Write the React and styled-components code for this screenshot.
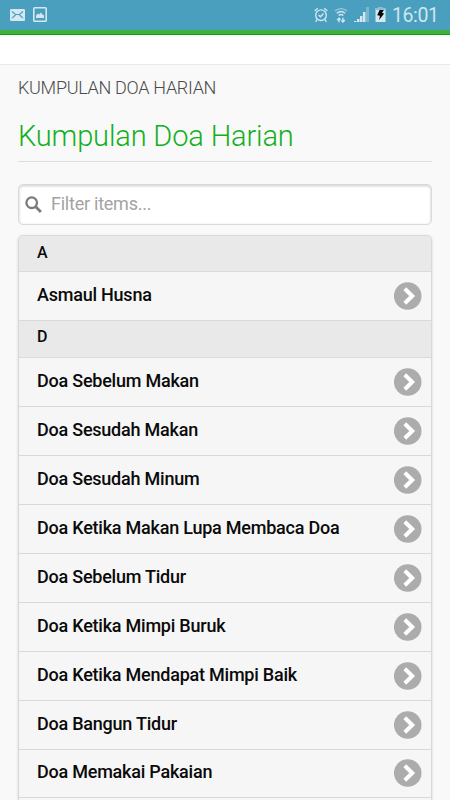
import React from "react";
import styled, { createGlobalStyle } from "styled-components";

const groups = [
    { letter: "A", items: ["Asmaul Husna"] },
    {
        letter: "D",
        items: [
            "Doa Sebelum Makan",
            "Doa Sesudah Makan",
            "Doa Sesudah Minum",
            "Doa Ketika Makan Lupa Membaca Doa",
            "Doa Sebelum Tidur",
            "Doa Ketika Mimpi Buruk",
            "Doa Ketika Mendapat Mimpi Baik",
            "Doa Bangun Tidur",
            "Doa Memakai Pakaian",
        ],
    },
];

const MailIcon = () => (
    <svg width="15" height="12" viewBox="0 0 15 12">
        <rect width="15" height="12" rx="1.2" fill="#d3e8f0" />
        <path d="M2 2.5 5.5 5.5H9.5L13 2.5M2 9.2 5.5 6M13 9.2 9.5 6" fill="none" stroke="#4a9fbf" strokeWidth="1.1" />
    </svg>
);

const PictureIcon = () => (
    <svg width="14" height="15" viewBox="0 0 14 15">
        <rect x=".8" y=".8" width="12.4" height="13.4" rx=".8" fill="none" stroke="#d3e8f0" strokeWidth="1.6" />
        <path d="M3 11V8.5L5 6.5 6.2 7.5 8 5.5 9.3 7.5 11 8.3V11Z" fill="#d3e8f0" />
    </svg>
);

const AlarmIcon = () => (
    <svg width="14" height="16" viewBox="0 0 14 16" fill="none" stroke="#d0e7ef" strokeWidth="1.4">
        <circle cx="7" cy="8.2" r="5.3" />
        <path d="M.7 4 3.7 1.3M10.3 1.3 13.3 4M3 12.5 1.7 14.8M11 12.5 12.3 14.8M4.5 8 6.5 9.8 9.5 6.5" />
    </svg>
);

const WifiIcon = () => (
    <svg width="14" height="16" viewBox="0 0 14 16" fill="none" stroke="#d0e7ef" strokeWidth="1.4">
        <path d="M1 4Q7-.8 13 4" opacity=".6" />
        <path d="M2.8 6.3Q7 2.6 11.2 6.3M4.7 8.6Q7 6.4 9.3 8.6" />
        <path d="M5 15.2V11.4M3.2 13.2 5 11.2 6.6 12.8M9 10.8V14.7M7.4 13.2 9 15 10.9 13.1" />
    </svg>
);

const SignalIcon = () => (
    <svg width="15" height="15" viewBox="0 0 15 15" fill="#d3e8f0">
        <path d="M0 14h2.5v1H0zM3 12h2.5v3H3zM6 9h2.5v6H6zM9 5h2.5v10H9z" />
        <path d="M12 0h3v15h-3z" opacity=".35" />
    </svg>
);

const BatteryIcon = () => (
    <svg width="11" height="15" viewBox="0 0 11 15">
        <path d="M3 0h5v1.2h2.5V15H.5V1.2H3z" fill="#d3e8f0" />
        <path d="M3 0h5v1.2h2.5V3H.5V1.2H3z" fill="#86bfd4" />
        <path d="M4.6 3H8.8L7 6.1 9.2 6.4 4 13 5 8.7 2.2 8.2Z" fill="#050505" />
    </svg>
);

const SearchIcon = () => (
    <svg width="17" height="17" viewBox="0 0 17 17" fill="none" stroke="#7c7c7c">
        <circle cx="6.7" cy="6.7" r="5.3" strokeWidth="2.3" />
        <path d="M10.7 10.7 15.9 15.9" strokeWidth="2.8" />
    </svg>
);

const ArrowIcon = () => (
    <svg width="28" height="28" viewBox="0 0 28 28">
        <circle cx="13.7" cy="14" r="13.8" fill="#acacac" />
        <path d="M10.8 6.8 18.2 14 10.8 21.2" fill="none" stroke="#fff" strokeWidth="4" />
    </svg>
);

const App = () => {
    return (
        <Page>
            <GlobalStyle />
            <StatusBar>
                <Left>
                    <MailIcon />
                    <PictureIcon />
                </Left>
                <Right>
                    <AlarmIcon />
                    <WifiIcon />
                    <SignalIcon />
                    <BatteryIcon />
                    <Clock>16:01</Clock>
                </Right>
            </StatusBar>
            <Stripe />
            <Header />
            <Content>
                <Crumb>KUMPULAN DOA HARIAN</Crumb>
                <Title>Kumpulan Doa Harian</Title>
                <Search>
                    <SearchIcon />
                    <input placeholder="Filter items..." />
                </Search>
                <List>
                    {groups.map((group) => (
                        <React.Fragment key={group.letter}>
                            <Divider $first={group.letter === "A"}>{group.letter}</Divider>
                            {group.items.map((item) => (
                                <Item key={item}>
                                    <span>{item}</span>
                                    <ArrowIcon />
                                </Item>
                            ))}
                        </React.Fragment>
                    ))}
                </List>
            </Content>
        </Page>
    );
};

export default App;

const GlobalStyle = createGlobalStyle`
* {
    box-sizing: border-box;
}
body {
    margin: 0;
    font-family: Roboto, sans-serif;
}
svg {
    display: block;
    flex-shrink: 0;
}
`;

const Page = styled.div`
width: 100%;
height: 100vh;
overflow: hidden;
display: flex;
flex-direction: column;
background-color: #f9f9f9;
`;

const StatusBar = styled.div`
height: 30px;
flex-shrink: 0;
padding: 0 11px 0 10px;
display: flex;
justify-content: space-between;
align-items: center;
background-color: #4a9fbf;
`;

const Left = styled.div`
display: flex;
align-items: center;
gap: 8px;
padding-bottom: 1px;
`;

const Right = styled.div`
display: flex;
align-items: center;
gap: 6px;
padding-bottom: 1px;
`;

const Clock = styled.div`
width: 47px;
font-size: 19.5px;
line-height: 30px;
letter-spacing: -0.4px;
padding-top: 2px;
color: #cfe6ee;
white-space: nowrap;
`;

const Stripe = styled.div`
height: 5px;
flex-shrink: 0;
background-color: #3eb23f;
border-bottom: 1px solid #06a60c;
`;

const Header = styled.div`
height: 30px;
flex-shrink: 0;
background-color: #fff;
border-bottom: 1px solid #e9e9e9;
`;

const Content = styled.div`
flex: 1;
min-height: 0;
padding: 11px 18px 0;
display: flex;
flex-direction: column;
`;

const Crumb = styled.div`
height: 24px;
flex-shrink: 0;
line-height: 24px;
font-size: 18px;
font-weight: 300;
letter-spacing: -0.3px;
color: #4a4a4a;
white-space: nowrap;
`;

const Title = styled.h1`
height: 62px;
flex-shrink: 0;
margin: 0;
padding-top: 18px;
line-height: 36px;
font-size: 29px;
font-weight: 300;
letter-spacing: -0.15px;
color: #12b01e;
white-space: nowrap;
border-bottom: 1px solid #dedede;
`;

const Search = styled.div`
height: 41px;
flex-shrink: 0;
margin-top: 22px;
padding: 0 6px;
display: flex;
align-items: center;
gap: 9px;
background-color: #fff;
border: 1px solid #d9d9d9;
border-radius: 5px;
box-shadow: inset 0 1px 3px rgba(0, 0, 0, 0.2);

    input {
        flex: 1;
        min-width: 0;
        padding: 0 0 2px;
        border: 0;
        outline: none;
        background: transparent;
        font-family: Roboto, sans-serif;
        font-size: 18px;
        letter-spacing: -0.24px;
    }

    input::placeholder {
        color: #a3a3a3;
    }
`;

const List = styled.div`
flex: 1;
min-height: 0;
margin-top: 10px;
background-color: #f6f6f6;
border: 1px solid #d9d9d9;
border-bottom: 0;
border-radius: 5px 5px 0 0;
box-shadow: 0 1px 3px rgba(0, 0, 0, 0.15);
`;

const Divider = styled.div`
height: ${({ $first }) => ($first ? "36px" : "37.5px")};
padding: 0 18px;
line-height: ${({ $first }) => ($first ? "33px" : "32px")};
font-size: 16px;
font-weight: 500;
color: #0a0a0a;
background-color: #e9e9e9;
border-bottom: 1px solid #dbdbdb;
border-radius: ${({ $first }) => ($first ? "4px 4px 0 0" : "0")};
`;

const Item = styled.div`
height: 48.9px;
padding: 0 9.5px 0 18px;
display: flex;
justify-content: space-between;
align-items: center;
font-size: 18px;
font-weight: 500;
letter-spacing: -0.23px;
color: #0a0a0a;
border-bottom: 1px solid #d9d9d9;

    span {
        padding-bottom: 3px;
        white-space: nowrap;
    }
`;
